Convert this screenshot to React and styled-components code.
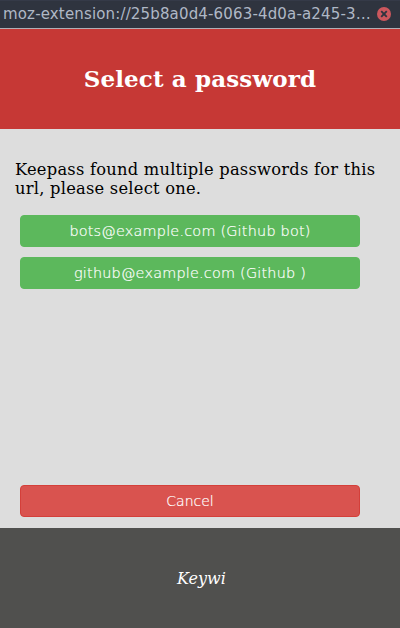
import React from 'react';
import styled, { createGlobalStyle } from 'styled-components';

const GlobalStyle = createGlobalStyle`
  * { box-sizing: border-box; }
  body { margin: 0; background: #dddddd; font-family: "DejaVu Serif", serif; }
`;
const Window = styled.div`
  width: 400px;
  height: 628px;
  display: flex;
  flex-direction: column;
  overflow: hidden;
`;
const TitleBar = styled.div`
  height: 29px;
  flex: none;
  display: flex;
  align-items: center;
  padding: 0 9px 1px 3px;
  gap: 5px;
  background: linear-gradient(#353a48 1px, #2f343f 1px);
  border-bottom: 1px solid #b0aeb5;
  color: #afb8c6;
  font: 15px/28px "DejaVu Sans", sans-serif;
  letter-spacing: 0.155px;
`;
const Title = styled.div`
  flex: 1;
  white-space: nowrap;
`;
const CloseIcon = styled.svg`
  width: 14px;
  height: 14px;
  flex: none;
`;
const Header = styled.header`
  height: 100px;
  flex: none;
  display: flex;
  align-items: center;
  justify-content: center;
  background: #c63835;
  color: #fff;
`;
const Heading = styled.h1`
  margin: 0;
  font-size: 23px;
  line-height: 28px;
  letter-spacing: 0.13px;
`;
const Content = styled.main`
  flex: 1;
  display: flex;
  flex-direction: column;
  padding: 31px 15px 11px;
  background: #dddddd;
`;
const Message = styled.p`
  margin: 0 -5px 17px 0;
  font-size: 16.3px;
  line-height: 19px;
  letter-spacing: 0.24px;
  color: #000;
`;
const List = styled.div`
  flex: 1;
  display: flex;
  flex-direction: column;
  gap: 10px;
`;
const Button = styled.button`
  width: 340px;
  height: 32px;
  margin: 0 0 0 5px;
  padding: 0;
  flex: none;
  border: 1px solid ${(p) => (p.$danger ? '#d43f3a' : '#5cb85c')};
  border-radius: 4px;
  background: ${(p) => (p.$danger ? '#d9534f' : '#5cb85c')};
  color: #fff;
  font: 200 ${(p) => (p.$danger ? '14px' : '14.4px')}/20px "DejaVu Sans", sans-serif;
  letter-spacing: ${(p) => (p.$danger ? '0' : '0.22px')};
  -webkit-text-stroke: 0.2px #fff;
`;
const Footer = styled.footer`
  height: 100px;
  flex: none;
  display: flex;
  align-items: center;
  justify-content: center;
  padding-left: 3px;
  background: #50504e;
  color: #fff;
  font-size: 16px;
  font-style: italic;
`;

export default function App() {
  return (
    <Window>
      <GlobalStyle />
      <TitleBar>
        <Title>moz-extension://25b8a0d4-6063-4d0a-a245-3…</Title>
        <CloseIcon viewBox="0 0 14 14">
          <circle cx="7" cy="7" r="7" fill="#cc575d" />
          <path d="M4.2 4.2l5.6 5.6M9.8 4.2l-5.6 5.6" stroke="#2f343f" strokeWidth="1.9" />
        </CloseIcon>
      </TitleBar>
      <Header><Heading>Select a password</Heading></Header>
      <Content>
        <Message>Keepass found multiple passwords for this url, please select one.</Message>
        <List>
          <Button>bots@example.com (Github bot)</Button>
          <Button>github@example.com (Github )</Button>
        </List>
        <Button $danger>Cancel</Button>
      </Content>
      <Footer>Keywi</Footer>
    </Window>
  );
}
